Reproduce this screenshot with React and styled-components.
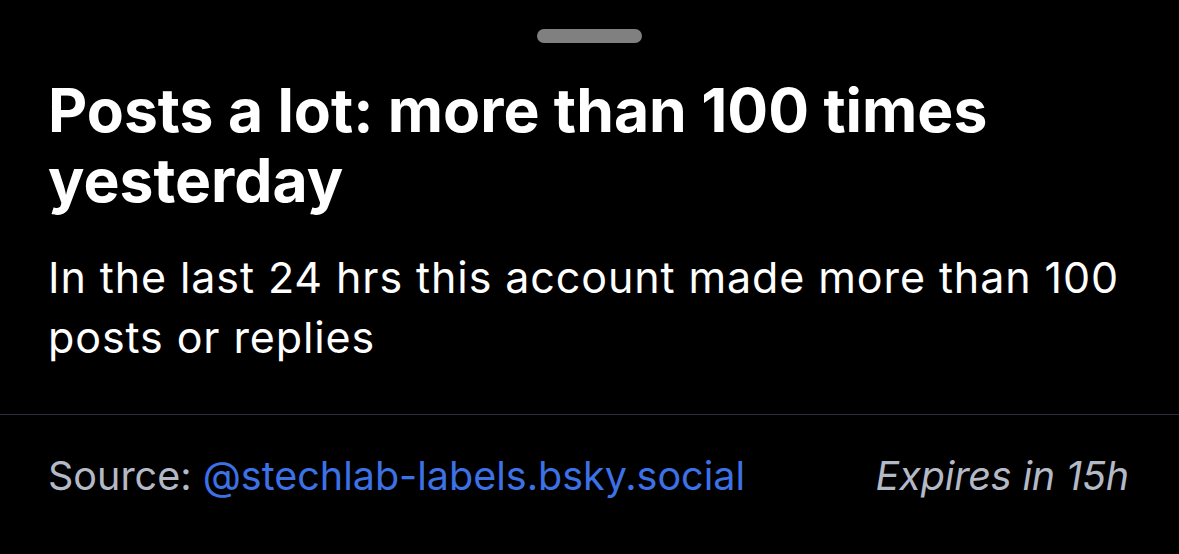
import React from 'react';
import styled, { createGlobalStyle } from 'styled-components';

const GlobalStyle = createGlobalStyle`
  html, body {
    margin: 0;
    padding: 0;
    background: #000;
  }
  body {
    font-family: Inter, "Noto Sans", sans-serif;
    -webkit-font-smoothing: antialiased;
  }
`;

const Sheet = styled.div`
  width: 1179px;
  height: 554px;
  background: #000;
  display: flex;
  flex-direction: column;
  overflow: hidden;
`;

const HandleRow = styled.div`
  display: flex;
  justify-content: center;
  padding-top: 29px;
`;

const Handle = styled.div`
  width: 105px;
  height: 14px;
  border-radius: 7px;
  background: #808080;
`;

const Content = styled.div`
  padding: 32px 48px 0;
  display: flex;
  flex-direction: column;
`;

const Title = styled.h1`
  margin: 0;
  color: #fff;
  font-size: 60.6px;
  font-weight: 700;
  line-height: 70px;
`;

const Description = styled.p`
  margin: 32px 0 0;
  color: #fff;
  font-size: 43px;
  font-weight: 400;
  line-height: 60px;
  letter-spacing: 0.9px;
`;

const Divider = styled.div`
  height: 1px;
  background: #2e2c3e;
  margin-top: 47px;
`;

const Footer = styled.div`
  display: flex;
  justify-content: space-between;
  align-items: center;
  padding: 37px 50px 0 48px;
  font-size: 39.5px;
  line-height: 48px;
`;

const Source = styled.span`
  color: #b4b9c6;
`;

const Link = styled.a`
  color: #3d71e6;
  text-decoration: none;
`;

const Expires = styled.span`
  color: #b4b9c6;
  font-style: italic;
  letter-spacing: -0.15px;
`;

export default function App() {
  return (
    <>
      <GlobalStyle />
      <Sheet>
        <HandleRow>
          <Handle />
        </HandleRow>
        <Content>
          <Title>Posts a lot: more than 100 times yesterday</Title>
          <Description>
            In the last 24 hrs this account made more than 100 posts or replies
          </Description>
        </Content>
        <Divider />
        <Footer>
          <Source>
            Source: <Link href="#">@stechlab-labels.bsky.social</Link>
          </Source>
          <Expires>Expires in 15h</Expires>
        </Footer>
      </Sheet>
    </>
  );
}
